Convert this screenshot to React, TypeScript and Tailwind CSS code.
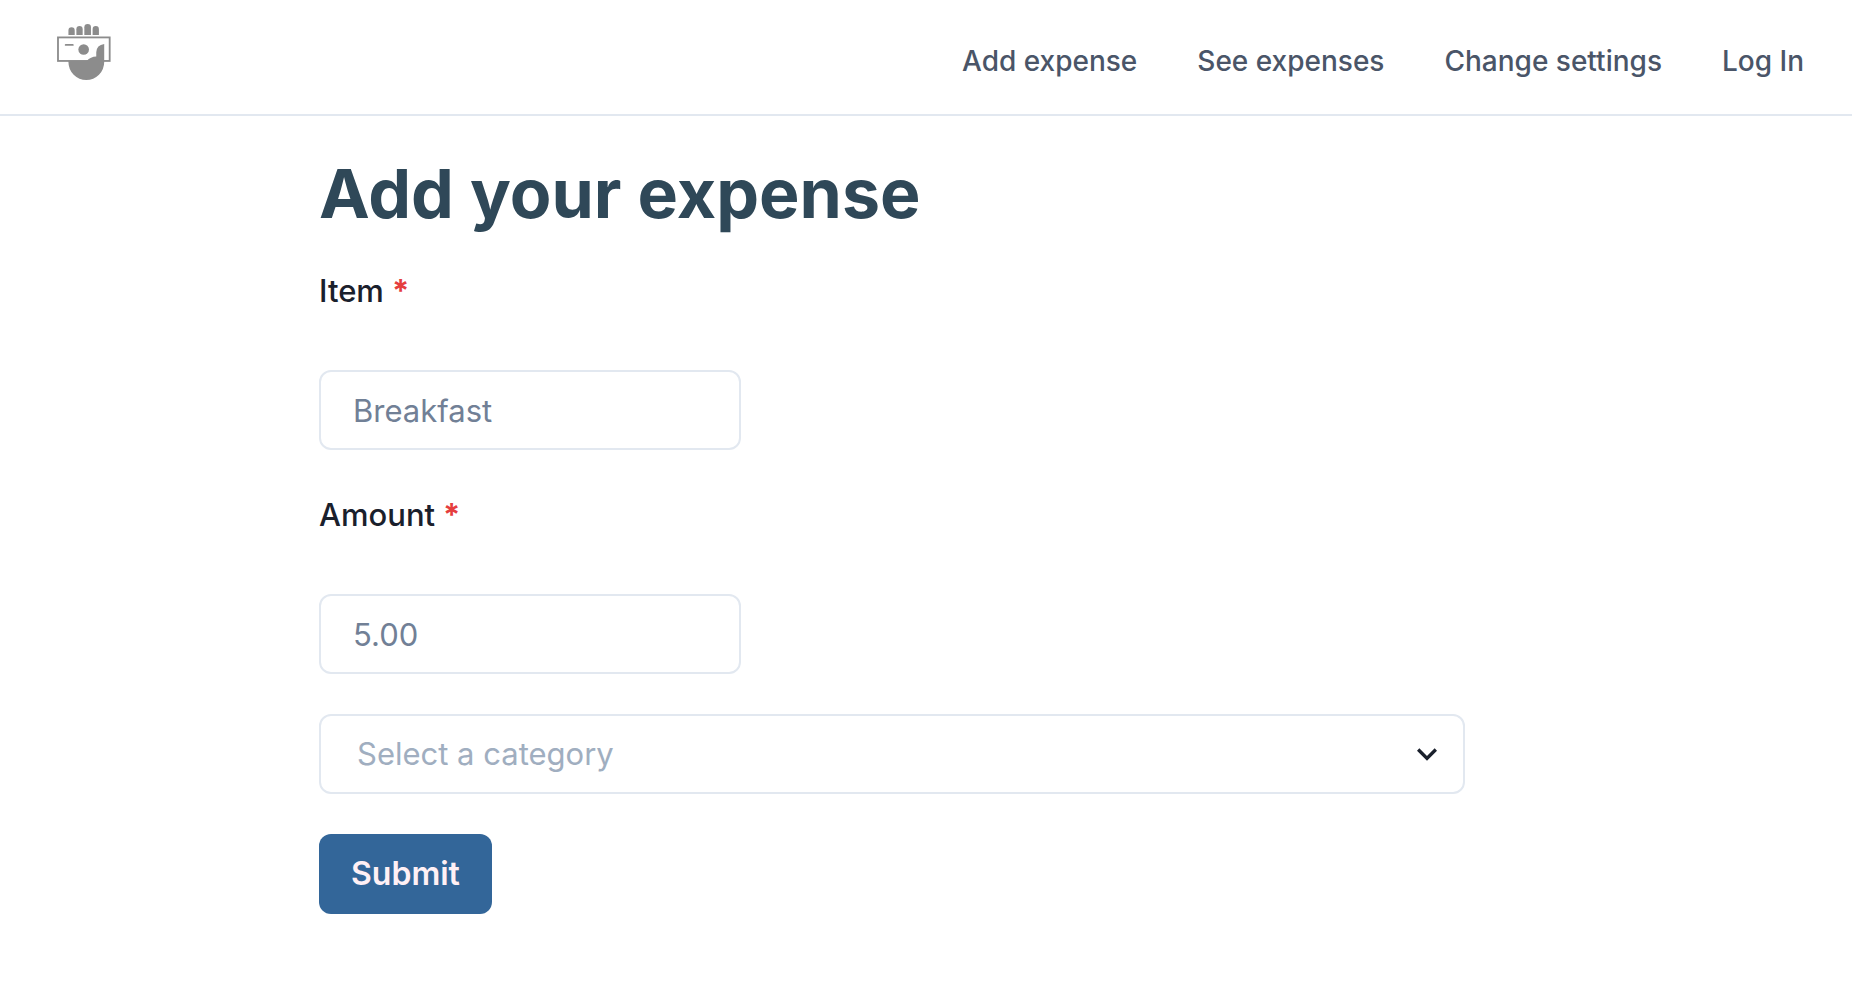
import { useState } from "react";

const NAV_LINKS = ["Add expense", "See expenses", "Change settings", "Log In"];

const CATEGORIES = ["Food", "Transport", "Housing", "Leisure"];

function Logo() {
  return (
    <svg
      width="54"
      height="56"
      viewBox="52 41 162 169"
      fill="#8c8c8c"
      role="img"
      aria-label="Home"
    >
      <path d="M86 74V60.500a9.500 9.500 0 0 1 19 0V74z" />
      <path d="M110 74V56.500a9.500 9.500 0 0 1 19 0V74z" />
      <path d="M134 74V51a10 10 0 0 1 20 0v23z" />
      <path d="M159 74V56.500a9.500 9.500 0 0 1 19 0V74z" />
      <rect x="54.500" y="81.500" width="156" height="71" fill="none" stroke="#8c8c8c" strokeWidth="5.500" />
      <rect x="75" y="101" width="27" height="6" rx="3" />
      <circle cx="132" cy="118" r="16" />
      <path d="M86 153H141Q153 139 170 139V126Q171 104 194 101V156A54 54 0 0 1 86 156Z" />
    </svg>
  );
}

function Header() {
  return (
    <header className="flex items-start justify-between border-b-2 border-[#e2e8f0] pt-6 pr-12 pb-8 pl-[57px]">
      <a href="#home">
        <Logo />
      </a>
      <nav className="mt-4 flex gap-15">
        {NAV_LINKS.map((label) => (
          <a
            key={label}
            href={"#" + label.toLowerCase().replace(" ", "-")}
            className="text-[28px] leading-[42px] font-medium text-[#4a5568]"
          >
            {label}
          </a>
        ))}
      </nav>
    </header>
  );
}

type FieldProps = { id: string; label: string; placeholder: string };

function Field({ id, label, placeholder }: FieldProps) {
  return (
    <div className="flex flex-col items-start gap-[54px]">
      <label htmlFor={id} className="flex gap-2 text-[31px] leading-[50px] font-medium text-[#1a202c]">
        {label}
        <span aria-hidden="true" className="font-bold text-[#e53e3e]">
          *
        </span>
      </label>
      <input
        id={id}
        type="text"
        required
        placeholder={placeholder}
        className="h-20 w-full max-w-[422px] rounded-xl border-2 border-[#e2e8f0] px-8 text-[31px] text-[#1a202c] placeholder:text-[#718096]"
      />
    </div>
  );
}

function CategorySelect() {
  const [category, setCategory] = useState("");
  return (
    <div className="relative">
      <select
        aria-label="Category"
        value={category}
        onChange={(event) => setCategory(event.target.value)}
        className="h-20 w-full appearance-none rounded-xl border-2 border-[#e2e8f0] bg-white pr-16 pl-9 text-[31px] text-[#a0aec0]"
      >
        <option value="">Select a category</option>
        {CATEGORIES.map((name) => (
          <option key={name} value={name}>
            {name}
          </option>
        ))}
      </select>
      <svg
        viewBox="0 0 24 24"
        className="pointer-events-none absolute top-5 right-[18px] size-10"
        fill="#1a202c"
        aria-hidden="true"
      >
        <path d="M16.590 8.590L12 13.170 7.410 8.590 6 10l6 6 6-6z" />
      </svg>
    </div>
  );
}

export default function App() {
  return (
    <div className="min-h-screen bg-white font-['Inter','Liberation_Sans',sans-serif]">
      <Header />
      <main className="mx-auto max-w-[1214px] pt-[34px] pr-[68px]">
        <h1 className="text-[68px] leading-[86px] font-bold text-[#2f4858]">Add your expense</h1>
        <form className="mt-[30px] flex flex-col gap-10" onSubmit={(event) => event.preventDefault()}>
          <Field id="item" label="Item" placeholder="Breakfast" />
          <Field id="amount" label="Amount" placeholder="5.00" />
          <CategorySelect />
          <button
            type="submit"
            className="h-20 self-start rounded-xl bg-[#336699] px-8 text-[32px] font-semibold text-[#fff0f5]"
          >
            Submit
          </button>
        </form>
      </main>
    </div>
  );
}
